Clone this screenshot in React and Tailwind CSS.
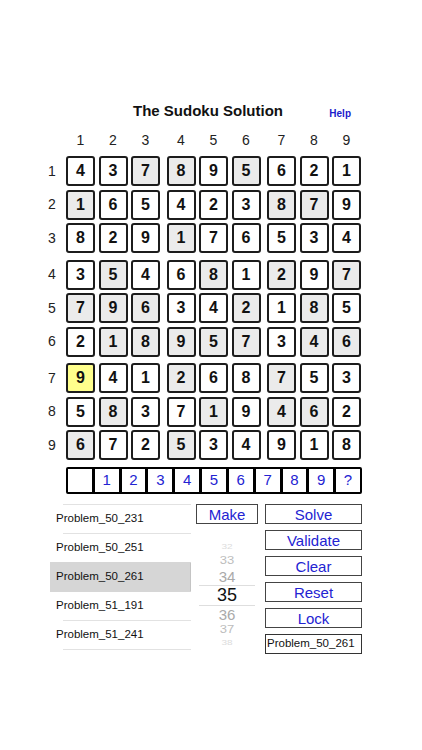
import React from "react"

const grid = [
  "437895621",
  "165423879",
  "829176534",
  "354681297",
  "796342185",
  "218957346",
  "941268753",
  "583719462",
  "672534918",
]

// g = grey cell, y = yellow (selected), . = plain
const shade = [
  "..gg.g...",
  "g.....gg.",
  "...g.....",
  ".g..g.g.g",
  "ggg..g.g.",
  ".ggggg.gg",
  "y..g..g..",
  ".g..g.gg.",
  "g..g.....",
]

const problems = [
  "Problem_50_231",
  "Problem_50_251",
  "Problem_50_261",
  "Problem_51_191",
  "Problem_51_241",
]

function Cell({ value, kind }) {
  const bg =
    kind === "y" ? "bg-[#ffff8c]" : kind === "g" ? "bg-[#ebebeb]" : "bg-white"
  return (
    <div
      className={`w-[29px] h-[30px] border-2 border-[#1c1c1c] rounded-[3px] flex items-center justify-center text-[16px] font-bold text-[#111] ${bg}`}
    >
      {value}
    </div>
  )
}

function Band({ rows, start }) {
  return (
    <div className="flex flex-col gap-[3.5px]">
      {rows.map((row, ri) => {
        const r = start + ri
        return (
          <div key={r} className="flex items-center">
            <div className="w-[20px] text-center text-[14px] text-[#222] mr-[4px]">
              {r + 1}
            </div>
            <div className="flex gap-[6.5px]">
              {[0, 1, 2].map((b) => (
                <div key={b} className="flex gap-[3.5px]">
                  {[0, 1, 2].map((k) => {
                    const c = b * 3 + k
                    return (
                      <Cell key={c} value={row[c]} kind={shade[r][c]} />
                    )
                  })}
                </div>
              ))}
            </div>
          </div>
        )
      })}
    </div>
  )
}

function Btn({ children, className = "" }) {
  return (
    <div
      className={`h-[20px] border border-[#444] flex items-center justify-center text-[15px] leading-none text-[#2323d2] ${className}`}
    >
      {children}
    </div>
  )
}

export default function App() {
  return (
    <div
      className="w-[422px] h-[750px] bg-white overflow-hidden"
      style={{ fontFamily: '"Liberation Sans", Arial, sans-serif' }}
    >
      {/* HEADER */}
      <div className="grid grid-cols-[1fr_auto_1fr] items-center pt-[101px] pr-[6px] h-[120px]">
        <div />
        <h1 className="text-[15px] font-bold text-[#111] leading-[20px]">
          The Sudoku Solution
        </h1>
        <div className="flex justify-end pr-[65px] pt-[4px]">
          <span className="text-[10px] font-bold text-[#1b1bcc]">Help</span>
        </div>
      </div>

      {/* BOARD */}
      <div className="pl-[42px] mt-[11px]">
        <div className="flex ml-[24px] gap-[6.5px] h-[18px] items-center text-[14px] text-[#222]">
          {[0, 1, 2].map((b) => (
            <div key={b} className="flex gap-[3.5px]">
              {[1, 2, 3].map((k) => (
                <div key={k} className="w-[29px] text-center">
                  {b * 3 + k}
                </div>
              ))}
            </div>
          ))}
        </div>

        <div className="flex flex-col gap-[6.5px] mt-[7px]">
          <Band rows={grid.slice(0, 3)} start={0} />
          <Band rows={grid.slice(3, 6)} start={3} />
          <Band rows={grid.slice(6, 9)} start={6} />
        </div>

        {/* PALETTE */}
        <div className="ml-[24px] mt-[7px] w-[296px] h-[27px] flex border-2 border-black divide-x-[3px] divide-black rounded-[2px]">
          {["", "1", "2", "3", "4", "5", "6", "7", "8", "9", "?"].map((d, i) => (
            <div
              key={i}
              className="flex-1 flex items-center justify-center text-[15px] text-[#2323d2]"
            >
              {d}
            </div>
          ))}
        </div>
      </div>

      {/* CONTROLS */}
      <div className="flex items-start pl-[50px] mt-[10px]">
        {/* list */}
        <div className="w-[141px] flex flex-col">
          <div className="h-px ml-[13px] bg-[#e2e2e2]" />
          {problems.map((p, i) => (
            <div key={p} className="flex flex-col">
              <div
                className={`h-[28px] flex items-center pl-[6px] text-[11.5px] text-[#111] ${
                  i === 2 ? "bg-[#d6d6d6] border-r border-[#c4c4c4]" : ""
                }`}
              >
                {p}
              </div>
              <div
                className={`h-px ${
                  i === 1 || i === 2 ? "bg-[#d6d6d6]" : "ml-[13px] bg-[#e2e2e2]"
                }`}
              />
            </div>
          ))}
        </div>

        {/* make + picker */}
        <div className="w-[62px] ml-[5px] flex flex-col">
          <Btn className="h-[18px]">Make</Btn>
          <div className="mt-[16px] h-[108px] overflow-hidden flex flex-col items-center text-center leading-none">
            <div className="h-[14px] flex items-center text-[10px] text-[#dcdcdc] scale-y-[0.7]">
              32
            </div>
            <div className="h-[14px] flex items-center text-[13px] text-[#bdbdbd] scale-y-[0.85]">
              33
            </div>
            <div className="h-[18px] flex items-center text-[15px] text-[#aaaaaa]">
              34
            </div>
            <div className="w-[56px] h-px bg-[#dedede]" />
            <div className="h-[19px] flex items-center text-[18px] text-[#111]">
              35
            </div>
            <div className="w-[56px] h-px bg-[#dedede]" />
            <div className="h-[17px] flex items-center text-[15px] text-[#aaaaaa]">
              36
            </div>
            <div className="h-[16px] flex items-center text-[13px] text-[#bdbdbd] scale-y-[0.85]">
              37
            </div>
            <div className="h-[10px] flex items-center text-[10px] text-[#dcdcdc] scale-y-[0.7]">
              38
            </div>
          </div>
        </div>

        {/* action buttons */}
        <div className="w-[97px] ml-[7px] flex flex-col gap-[6px]">
          <Btn>Solve</Btn>
          <Btn>Validate</Btn>
          <Btn>Clear</Btn>
          <Btn>Reset</Btn>
          <Btn>Lock</Btn>
          <div className="h-[20px] border border-[#333] flex items-center px-px text-[11.5px] text-[#111]">
            Problem_50_261
          </div>
        </div>
      </div>
    </div>
  )
}
